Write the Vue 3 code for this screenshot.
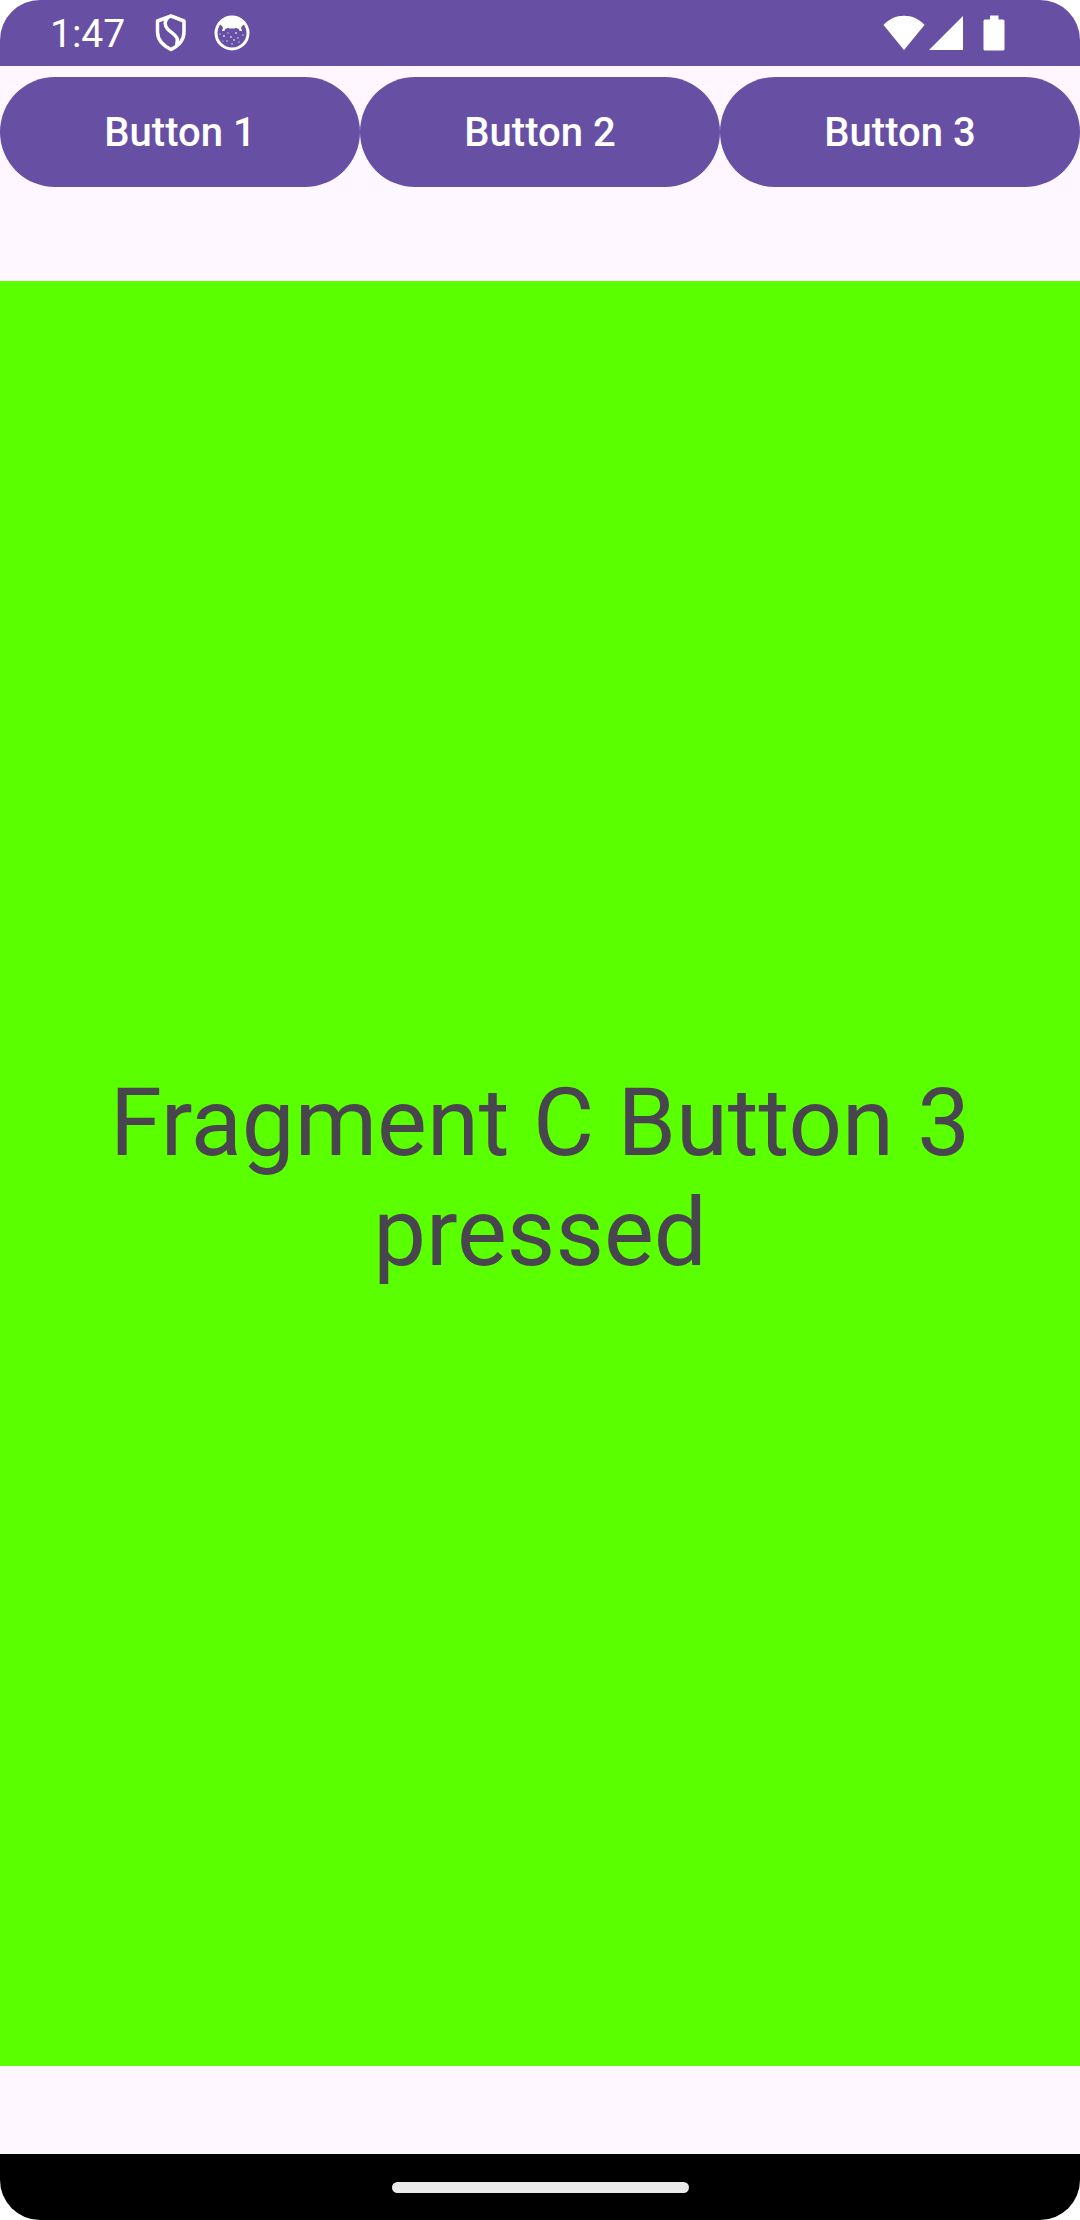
<script setup>
import { ref } from 'vue'

const fragments = [
  { id: 1, label: 'Button 1', message: 'Fragment A Button 1 pressed', color: '#ff5c00' },
  { id: 2, label: 'Button 2', message: 'Fragment B Button 2 pressed', color: '#00b2ff' },
  { id: 3, label: 'Button 3', message: 'Fragment C Button 3 pressed', color: '#5aff00' },
]
const active = ref(fragments[2])
</script>

<template>
  <div class="screen">
    <header class="status-bar">
      <div class="status-left">
        <span class="clock">1:47</span>
        <svg class="shield" width="32" height="38" viewBox="0 0 32 38" fill="none" stroke="#fff" stroke-linejoin="round">
          <path d="M16 2 L29 7 V18 C29 26 23 32 16 35.500 C9 32 2.500 26 2.500 18 V7 Z" stroke-width="3.500" />
          <path d="M13 3.500 C9 7 9.500 12 13 15.500 C16 18.500 20 20 22 24 C23 26.500 22.500 28 21.500 31" stroke-width="3.500" />
        </svg>
        <svg class="face" width="36" height="36" viewBox="0 0 36 36">
          <circle cx="18" cy="18" r="16" fill="none" stroke="#fff" stroke-width="3" />
          <path d="M5 9 Q9 2 18 2 Q27 2 31 9 L28 11 L27 13 L28 16 L25.500 16 L25 14 L22 13 Q18 14 14 13 L11 14 L10.500 16 L8 16 L9 13 L8 11 Z" fill="#fff" />
          <g fill="#fff" opacity="0.750">
            <circle cx="6" cy="19" r="0.700" /><circle cx="10" cy="21" r="1" /><circle cx="14" cy="18" r="0.700" />
            <circle cx="17" cy="22" r="0.900" /><circle cx="22" cy="18" r="1" /><circle cx="24" cy="23" r="0.800" />
            <circle cx="29" cy="20" r="0.800" /><circle cx="20" cy="25" r="0.900" /><circle cx="13" cy="26" r="0.800" />
            <circle cx="18" cy="29" r="0.800" /><circle cx="25" cy="27" r="0.700" /><circle cx="9" cy="26" r="0.600" />
          </g>
        </svg>
      </div>
      <div class="status-right">
        <svg width="42" height="36" viewBox="0 0 42 36"><path d="M21 35 L0.500 10 C6 4 13 0.800 21 0.800 C29 0.800 36 4 41.500 10 Z" fill="#fff" /></svg>
        <svg width="34" height="36" viewBox="0 0 34 36"><path d="M0 35 L34 1 V35 Z" fill="#fff" /></svg>
        <svg class="battery" width="22" height="36" viewBox="0 0 22 36"><path d="M7 0.500 H15.500 V4.500 H20 Q21.500 4.500 21.500 6 V34 Q21.500 35.500 20 35.500 H2 Q0.500 35.500 0.500 34 V6 Q0.500 4.500 2 4.500 H7 Z" fill="#fff" /></svg>
      </div>
    </header>

    <nav class="buttons">
      <button v-for="f in fragments" :key="f.id" type="button" class="btn" @click="active = f">{{ f.label }}</button>
    </nav>

    <main class="fragment" :style="{ backgroundColor: active.color }">
      <p class="message">{{ active.message }}</p>
    </main>

    <footer class="nav-bar">
      <div class="handle"></div>
    </footer>
  </div>
</template>

<style>
body {
  margin: 0;
  background: #fff;
}
</style>

<style scoped>
.screen {
  display: flex;
  flex-direction: column;
  min-height: 100vh;
  overflow: hidden;
  border-radius: 40px;
  background: #fef7ff;
  font-family: Roboto, sans-serif;
}
.status-bar {
  display: flex;
  justify-content: space-between;
  align-items: center;
  height: 66px;
  padding: 0 75px 0 50px;
  background: #6750a4;
  color: #fff;
}
.status-left,
.status-right {
  display: flex;
  align-items: center;
}
.clock {
  padding-top: 2px;
  font-size: 39px;
  line-height: 64px;
}
.shield {
  margin-left: 30px;
}
.face {
  margin-left: 27px;
}
.status-right {
  gap: 4px;
}
.battery {
  margin-left: 16px;
}
.buttons {
  display: flex;
  padding: 11px 0;
}
.btn {
  flex: 1;
  height: 110px;
  padding: 2px 0 0;
  border: 0;
  border-radius: 55px;
  background: #6750a4;
  color: #fff;
  font: 500 40px/46px Roboto, sans-serif;
  cursor: pointer;
}
.fragment {
  flex: 1;
  display: flex;
  align-items: center;
  justify-content: center;
  margin: 83px 0 88px;
  padding: 8px 88px 0;
}
.message {
  margin: 0;
  color: #49454f;
  font-size: 94px;
  line-height: 110px;
  text-align: center;
}
.nav-bar {
  display: flex;
  align-items: center;
  justify-content: center;
  height: 66px;
  background: #000;
}
.handle {
  width: 297px;
  height: 11px;
  border-radius: 6px;
  background: #ebebeb;
}
</style>
